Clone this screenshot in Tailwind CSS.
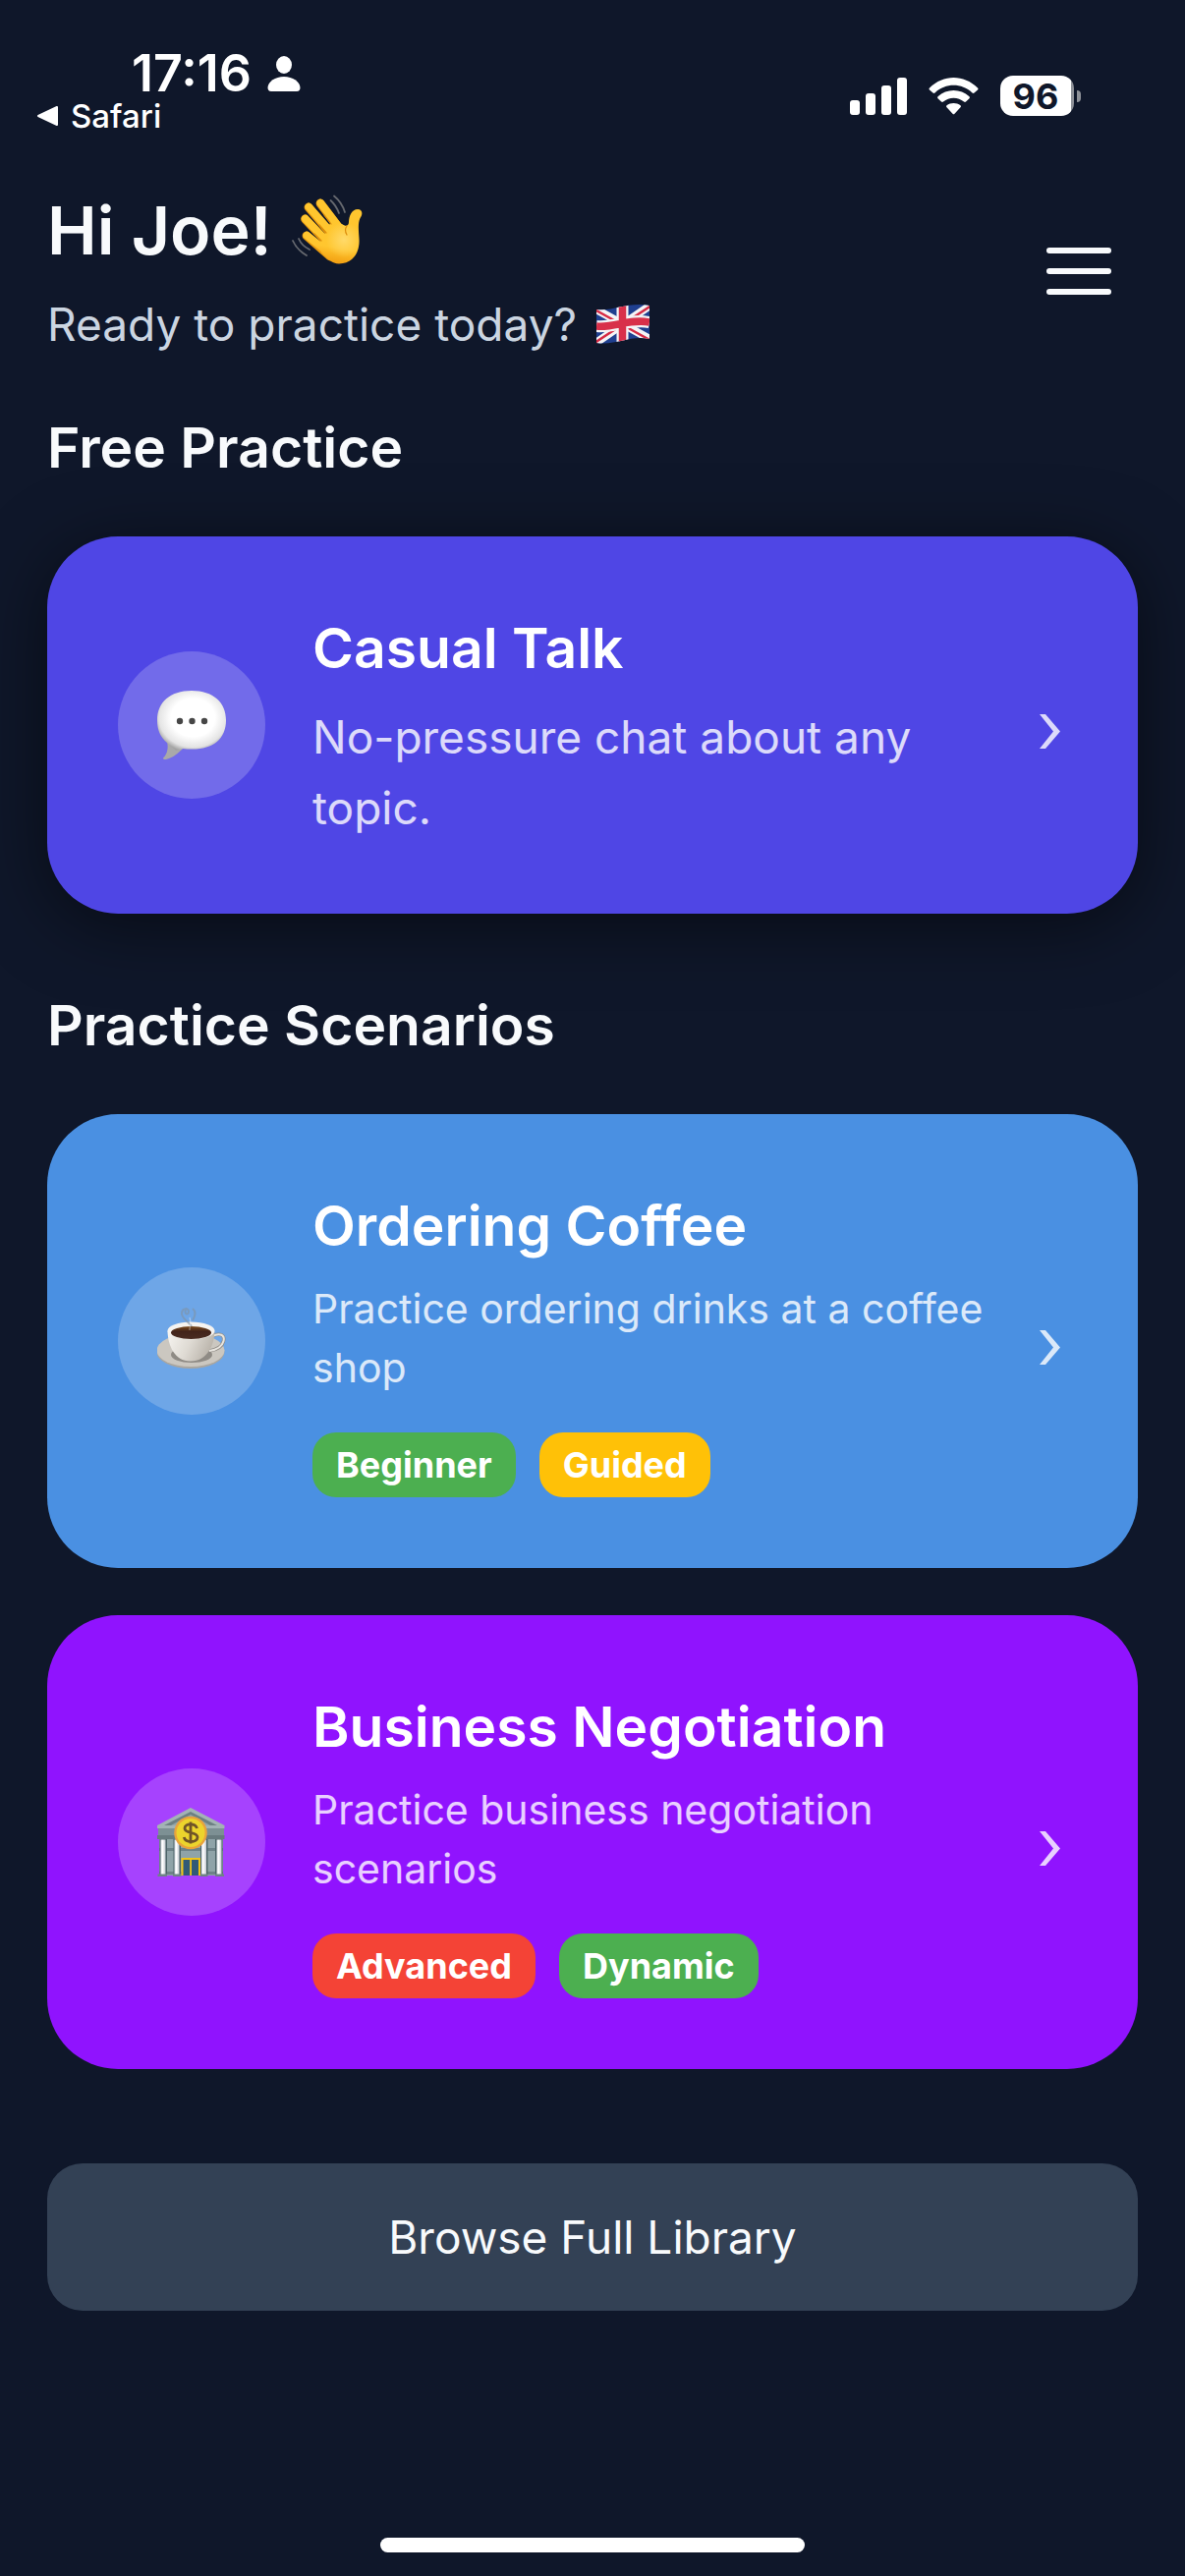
<!DOCTYPE html>
<html lang="en">

<head>
    <meta charset="UTF-8">
    <meta name="viewport" content="width=device-width, initial-scale=1.0">
    <script src="https://cdn.jsdelivr.net/npm/@tailwindcss/browser@4"></script>
    <title>Practice</title>
</head>

<body class="bg-[#0f172a] text-[#f8fafc] font-['Inter',sans-serif] min-h-screen flex flex-col">
    <!-- Status bar -->
    <div class="flex justify-between items-start pt-[48px] pl-[36px] pr-[106px] h-[186px] text-white">
        <div>
            <div class="flex items-center gap-4 pl-[98px] h-[54px]">
                <span class="text-[52px] leading-[54px] font-semibold">17:16</span>
                <svg class="w-[34px] h-[36px]" viewBox="0 0 34 36" fill="currentColor">
                    <ellipse cx="17" cy="9" rx="8" ry="9" />
                    <path d="M17 21C26 21 33 26 33.500 32Q33.500 36 30 36H4Q.5 36 .5 32C1 26 8 21 17 21Z" />
                </svg>
            </div>
            <a href="#" class="flex items-center gap-3 text-[33px] leading-[32px] font-medium">
                <svg class="w-[24px] h-[22px]" viewBox="0 0 24 22" fill="currentColor" stroke="currentColor" stroke-width="2" stroke-linejoin="round">
                    <path d="M3 11L22 2V20Z" />
                </svg>
                Safari
            </a>
        </div>
        <div class="flex items-center gap-[22px] pt-[29px]">
            <svg class="w-[58px] h-[38px]" viewBox="0 0 58 38" fill="currentColor">
                <rect x="0" y="23" width="10" height="15" rx="3" />
                <rect x="16" y="16" width="10" height="22" rx="3" />
                <rect x="32" y="8" width="10" height="30" rx="3" />
                <rect x="48" y="0" width="10" height="38" rx="3" />
            </svg>
            <svg class="w-[51px] h-[38px]" viewBox="0 0 51 38" fill="currentColor">
                <path d="M1 10.500C15-3.500 36-3.500 50 10.500Q51 11.500 50 12.500L46.500 15.500Q45.500 16.300 44.500 15.400C33.500 5.300 17.500 5.300 6.500 15.400Q5.500 16.300 4.500 15.500L1 12.500Q0 11.500 1 10.500Z" />
                <path d="M9.500 19.200C18.500 10.900 32.500 10.900 41.500 19.200Q42.400 20.200 41.500 21.200L38 24.600Q37 25.500 36 24.600C30 19.400 21 19.400 15 24.600Q14 25.500 13 24.600L9.500 21.200Q8.600 20.200 9.500 19.200Z" />
                <path d="M18.500 28.200C22.500 25.100 28.500 25.100 32.500 28.200Q33.500 29.200 32.500 30.200L26.500 36.700Q25.500 37.800 24.500 36.700L18.500 30.200Q17.500 29.200 18.500 28.200Z" />
            </svg>
            <div class="flex items-center gap-[3px]">
                <div class="w-[75px] h-[41px] rounded-[13px] bg-linear-to-r from-white from-96% to-[#8e9198] to-96% pr-[3px] flex items-center justify-center text-[#0f172a] text-[36px] leading-[40px] font-bold">96</div>
                <div class="w-[4px] h-[12px] rounded-r-full bg-[#8e9198]"></div>
            </div>
        </div>
    </div>

    <main class="flex-1 px-12">
        <header class="flex items-center justify-between">
            <div>
                <h1 class="flex items-center gap-5 text-[68px] leading-[96px] font-semibold">
                    Hi Joe!
                    <svg class="w-[72px] h-[72px]" viewBox="15 18 72 72" fill="none" stroke-linecap="round" role="img" aria-label="Waving hand">
                        <defs>
                            <linearGradient id="skin" gradientUnits="userSpaceOnUse" x1="66" y1="30" x2="56" y2="90">
                                <stop offset="0" stop-color="#ffc62e" />
                                <stop offset=".7" stop-color="#ffc62f" />
                                <stop offset="1" stop-color="#f0980c" />
                            </linearGradient>
                            <radialGradient id="palm" gradientUnits="userSpaceOnUse" cx="68" cy="64" r="18">
                                <stop offset="0" stop-color="#ffda6a" />
                                <stop offset="1" stop-color="#ffda6a" stop-opacity="0" />
                            </radialGradient>
                        </defs>
                        <g stroke="#e89a10" stroke-width="8.800">
                            <path d="M44 27L66 56M32 31L58 62M28.500 43L54 70M30 60L54 81" />
                        </g>
                        <g stroke="url(#skin)" stroke-width="7.600">
                            <path d="M44.300 26.600L66 55M32.300 30.600L60 62M28.800 42.600L54 69M30.300 59.600L56 80" />
                        </g>
                        <path fill="url(#skin)" d="M55 45L66 48C70 51 73 50 73 46C73 40 76 33 82 33C87 33 87.500 38 84.500 42C82 47 83 54 83.500 64C84 75 79 88 63 88.500C56 88.500 51 83 45 77L44 65L49 57Z" />
                        <path fill="url(#palm)" d="M55 45L66 48C70 51 73 50 73 46C73 40 76 33 82 33C87 33 87.500 38 84.500 42C82 47 83 54 83.500 64C84 75 79 88 63 88.500C56 88.500 51 83 45 77L44 65L49 57Z" />
                        <path stroke="#dc8d0c" stroke-width="1.200" d="M48 39L55 48M43 49L50 57M38 58L45 65M71 50Q68 54 71 59" />
                        <path stroke="#66696f" stroke-width="1.800" d="M58 19.500Q66 26 69 36M54.500 24Q60 29 63 37M16 65Q20 74 30 80M22 63Q25 70 33 74" />
                    </svg>
                </h1>
                <p class="mt-3 flex items-center gap-5 text-[46px] leading-[72px] text-[#cbd5e1]">
                    Ready to practice today?
                    <svg class="w-[54px] h-[40px]" viewBox="0 0 54 40" role="img" aria-label="British flag">
                        <defs>
                            <clipPath id="wavy">
                                <path d="M0 5C18 7 32-3 54 1V35C34 31 20 42 0 39Z" />
                            </clipPath>
                        </defs>
                        <g clip-path="url(#wavy)">
                            <path fill="#1f3f8f" d="M0 0H54V40H0Z" />
                            <path stroke="#f4f4f6" stroke-width="8" d="M-2 4L56 36M-2 40L56 0" />
                            <path stroke="#d62a44" stroke-width="2.500" d="M-2 5L27 21L56 37M-2 39L27 20L56 1" />
                            <path stroke="#f4f4f6" stroke-width="12" fill="none" d="M26.500 0V40M0 22C18 24 34 14 54 18" />
                            <path stroke="#d8304a" stroke-width="7.500" fill="none" d="M26.500 0V40M0 22C18 24 34 14 54 18" />
                        </g>
                    </svg>
                </p>
            </div>
            <button type="button" aria-label="Menu" class="w-[120px] h-[120px] flex flex-col items-center justify-center gap-[15px]">
                <span class="w-[66px] h-[6px] rounded-full bg-[#f8fafc]"></span>
                <span class="w-[66px] h-[6px] rounded-full bg-[#f8fafc]"></span>
                <span class="w-[66px] h-[6px] rounded-full bg-[#f8fafc]"></span>
            </button>
        </header>

        <section class="mt-12">
            <h2 class="text-[57px] leading-[84px] font-semibold">Free Practice</h2>
            <a href="#" class="mt-12 flex items-center bg-[#4f46e5] rounded-[72px] p-[72px] shadow-[0_12px_72px_rgba(0,0,0,0.5)]">
                <span class="shrink-0 w-[150px] h-[150px] rounded-full bg-white/20 flex items-center justify-center">
                    <svg class="w-[70px] h-[70px]" viewBox="59 63 70 70">
                        <defs>
                            <radialGradient id="bubble" cx=".52" cy=".45" r=".58">
                                <stop offset=".55" stop-color="#ffffff" />
                                <stop offset=".85" stop-color="#e4e4e4" />
                                <stop offset="1" stop-color="#a2a2a2" />
                            </radialGradient>
                        </defs>
                        <path fill="#a9a9a9" d="M69 115C71 123 68 129 65 131.500Q65 133.500 68 133C75 131.500 81 126 86 121Z" />
                        <path fill="url(#bubble)" d="M94 63C116 63 129 75 129 93C129 112 116 122.500 95 122.500Q89 122.500 85 122L78 124L69 116C62 110 59 103 59 93C59 75 72 63 94 63Z" />
                        <g fill="#464646">
                            <circle cx="82" cy="94" r="3.200" />
                            <circle cx="94.500" cy="94" r="3.200" />
                            <circle cx="107" cy="94" r="3.200" />
                        </g>
                    </svg>
                </span>
                <span class="flex-1 ml-12">
                    <span class="block text-[57px] leading-[84px] font-semibold text-white">Casual Talk</span>
                    <span class="block mt-3 text-[46px] leading-[72px] text-white/80">No-pressure chat about any topic.</span>
                </span>
                <svg class="shrink-0 w-[36px] h-[60px]" viewBox="0 0 36 60" fill="white" fill-opacity=".8">
                    <path d="M8 19H14L29 36.500L14 54H8L22 36.500Z" />
                </svg>
            </a>
        </section>

        <section class="mt-[72px]">
            <h2 class="text-[57px] leading-[84px] font-semibold">Practice Scenarios</h2>
            <div class="mt-12 flex flex-col gap-12">
                <a href="#" class="flex items-center bg-[#4a90e2] rounded-[72px] p-[72px]">
                    <span class="shrink-0 w-[150px] h-[150px] rounded-full bg-white/20 flex items-center justify-center">
                        <svg class="w-[70px] h-[70px]" viewBox="59 60 70 70" fill="none">
                            <defs>
                                <linearGradient id="cup" x1="0" x2="1" y1="0" y2=".3">
                                    <stop offset="0" stop-color="#f7f5f1" />
                                    <stop offset=".55" stop-color="#dedad3" />
                                    <stop offset="1" stop-color="#bbb5ac" />
                                </linearGradient>
                                <linearGradient id="coffee" x1="0" x2="0" y1="0" y2="1">
                                    <stop offset="0" stop-color="#7a4a1c" />
                                    <stop offset=".4" stop-color="#42231a" />
                                    <stop offset="1" stop-color="#4a2c22" />
                                </linearGradient>
                            </defs>
                            <ellipse cx="93" cy="106" rx="34.500" ry="17" fill="#aaa69f" />
                            <ellipse cx="93" cy="104.500" rx="34.500" ry="16.500" fill="#cbc7c0" />
                            <ellipse cx="94" cy="109" rx="21" ry="8" fill="#8f8b85" />
                            <path stroke="#8e8a84" stroke-width="3.400" d="M115 90C123 86 128 89 126.500 95C125 101 119 104 112 105" />
                            <path stroke="#e8e5df" stroke-width="2" d="M115 90C123 86 128 89 126.500 95C125 101 119 104 112 105" />
                            <path fill="url(#cup)" d="M69.500 85C70 99 76 115.500 93 115.500C110 115.500 117 99 117.500 85Z" />
                            <ellipse cx="93.500" cy="84.500" rx="24" ry="9" fill="#f5f3f0" />
                            <ellipse cx="93.500" cy="86.500" rx="20.500" ry="6.500" fill="url(#coffee)" />
                            <path stroke="#7f93a8" stroke-opacity=".65" stroke-width="2" d="M94 80C91 75 83 72 84 66C85 61 91 61 91 65C91 69 86 68 88 63M95 74C98 69 99 65 95 62" />
                            <path stroke="#fff" stroke-opacity=".4" stroke-width="1.200" d="M92 84C92 79 94 76 92 71" />
                        </svg>
                    </span>
                    <span class="flex-1 ml-12">
                        <span class="block text-[57px] leading-[84px] font-semibold text-white">Ordering Coffee</span>
                        <span class="block mt-3 text-[41px] leading-[60px] text-white/80">Practice ordering drinks at a coffee shop</span>
                        <span class="mt-9 flex gap-6 text-[36px] leading-[42px] font-bold text-white">
                            <span class="bg-[#4caf50] rounded-3xl px-6 py-3">Beginner</span>
                            <span class="bg-[#ffc107] rounded-3xl px-6 py-3">Guided</span>
                        </span>
                    </span>
                    <svg class="shrink-0 w-[36px] h-[60px]" viewBox="0 0 36 60" fill="white" fill-opacity=".8">
                        <path d="M8 19H14L29 36.500L14 54H8L22 36.500Z" />
                    </svg>
                </a>
                <a href="#" class="flex items-center bg-[#9013fe] rounded-[72px] p-[72px]">
                    <span class="shrink-0 w-[150px] h-[150px] rounded-full bg-white/20 flex items-center justify-center">
                        <svg class="w-[70px] h-[70px]" viewBox="60 60 70 70">
                            <defs>
                                <linearGradient id="pillar" x1="0" x2="1" y1="0" y2="0">
                                    <stop offset="0" stop-color="#d5d8e0" />
                                    <stop offset=".4" stop-color="#ffffff" />
                                    <stop offset="1" stop-color="#c3c7d0" />
                                </linearGradient>
                            </defs>
                            <path fill="#8fa3a8" d="M62 88H127V129H62Z" />
                            <path fill="#6e8288" d="M62 101H127V104H62ZM62 125H127V128H62Z" />
                            <path fill="#a3b3b5" d="M60 78L94 60L128.500 78V81H60Z" />
                            <path fill="#6d8083" d="M67 78L94 64L121 78Z" />
                            <path fill="#93a6a9" d="M74 78L94 67L114 78Z" />
                            <path fill="#7d9094" d="M61 81H128V88H61Z" />
                            <path fill="#687a7e" d="M60 88H128.500V92H60Z" />
                            <g fill="#4d6468">
                                <rect x="62.500" y="92" width="7.500" height="36" />
                                <rect x="76.500" y="92" width="7.500" height="36" />
                                <rect x="104" y="92" width="7.500" height="36" />
                                <rect x="119" y="92" width="7.500" height="36" />
                            </g>
                            <g fill="url(#pillar)">
                                <rect x="63.500" y="92.500" width="5" height="36" />
                                <rect x="77.500" y="92.500" width="5" height="36" />
                                <rect x="105" y="92.500" width="5" height="36" />
                                <rect x="120.500" y="92.500" width="5" height="36" />
                            </g>
                            <path fill="#6f8387" d="M60.500 127.500H70V130H60.500ZM76 127.500H84.500V130H76ZM103.500 127.500H111.500V130H103.500ZM119 127.500H128V130H119Z" />
                            <path fill="#f0c419" d="M84.500 111H104V129H84.500Z" />
                            <path fill="#315a77" d="M86.500 113H93.200V129H86.500ZM95 113H102V129H95Z" />
                            <circle cx="94" cy="85.500" r="16.800" fill="#e9a33b" />
                            <circle cx="94" cy="85.500" r="14.500" fill="#ecd42c" />
                            <path fill="none" stroke="#705428" stroke-width="2.800" d="M100.500 81C99 75.500 88 75.500 88 81C88 87 101 84 101 90C101 96 88.500 96 87.300 90M94 74.500V96.500" />
                        </svg>
                    </span>
                    <span class="flex-1 ml-12">
                        <span class="block text-[57px] leading-[84px] font-semibold text-white">Business Negotiation</span>
                        <span class="block mt-3 text-[41px] leading-[60px] text-white/80">Practice business negotiation scenarios</span>
                        <span class="mt-9 flex gap-6 text-[36px] leading-[42px] font-bold text-white">
                            <span class="bg-[#f44336] rounded-3xl px-6 py-3">Advanced</span>
                            <span class="bg-[#4caf50] rounded-3xl px-6 py-3">Dynamic</span>
                        </span>
                    </span>
                    <svg class="shrink-0 w-[36px] h-[60px]" viewBox="0 0 36 60" fill="white" fill-opacity=".8">
                        <path d="M8 19H14L29 36.500L14 54H8L22 36.500Z" />
                    </svg>
                </a>
            </div>
        </section>

        <button type="button" class="mt-24 w-full bg-[#334155] rounded-[36px] py-[39px] text-[46px] leading-[72px]">Browse Full Library</button>
    </main>

    <!-- Home indicator -->
    <div class="flex justify-center pb-6">
        <div class="w-[432px] h-[15px] rounded-full bg-white"></div>
    </div>
</body>

</html>
